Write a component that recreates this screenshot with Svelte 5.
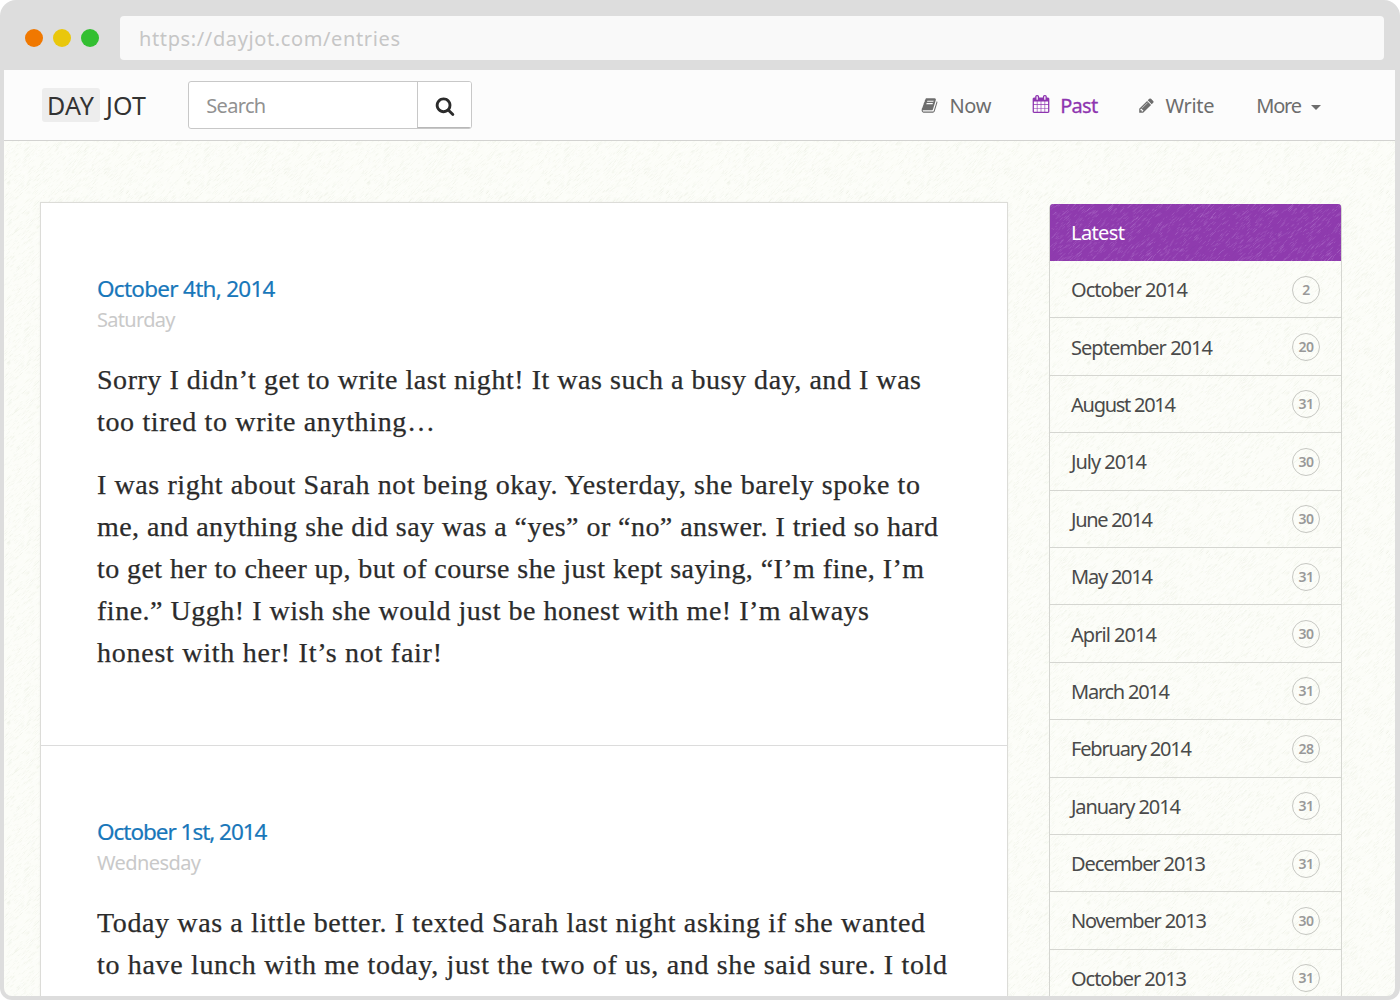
<script>
  const nav = [
    { label: 'Now', icon: 'book', width: 42 },
    { label: 'Past', icon: 'calendar', width: 38, active: true },
    { label: 'Write', icon: 'pencil', width: 49 }
  ];

  const icons = {
    search: 'M1216 832q0-185-131.5-316.5t-316.5-131.5-316.5 131.5-131.5 316.5 131.5 316.5 316.5 131.5 316.5-131.5 131.5-316.5zm512 832q0 52-38 90t-90 38q-54 0-90-38l-343-342q-179 124-399 124-143 0-273.5-55.5t-225-150-150-225-55.5-273.5 55.5-273.5 150-225 225-150 273.5-55.5 273.5 55.5 225 150 150 225 55.5 273.5q0 220-124 399l343 343q37 37 37 90z',
    calendar: 'M192 1664h288v-288h-288v288zm352 0h320v-288h-320v288zm-352-352h288v-320h-288v320zm352 0h320v-320h-320v320zm-352-384h288v-288h-288v288zm736 736h320v-288h-320v288zm-384-736h320v-288h-320v288zm768 736h288v-288h-288v288zm-384-352h320v-320h-320v320zm-352-864v-288q0-13-9.5-22.5t-22.5-9.5h-64q-13 0-22.5 9.5t-9.5 22.5v288q0 13 9.5 22.5t22.5 9.5h64q13 0 22.5-9.5t9.5-22.5zm736 864h288v-320h-288v320zm-384-384h320v-288h-320v288zm384 0h288v-288h-288v288zm32-480v-288q0-13-9.5-22.5t-22.5-9.5h-64q-13 0-22.5 9.5t-9.5 22.5v288q0 13 9.5 22.5t22.5 9.5h64q13 0 22.5-9.5t9.5-22.5zm384-64v1280q0 52-38 90t-90 38h-1408q-52 0-90-38t-38-90v-1280q0-52 38-90t90-38h128v-96q0-66 47-113t113-47h64q66 0 113 47t47 113v96h384v-96q0-66 47-113t113-47h64q66 0 113 47t47 113v96h128q52 0 90 38t38 90z',
    pencil: 'M491 1536l91-91-235-235-91 91v107h128v128h107zm523-928q0-22-22-22-10 0-17 7l-542 542q-7 7-7 17 0 22 22 22 10 0 17-7l542-542q7-7 7-17zm-54-192l416 416-832 832h-416v-416zm683 96q0 53-37 90l-166 166-416-416 166-165q36-38 90-38 53 0 91 38l235 234q37 39 37 91z',
    book: 'M1703 478q40 57 18 129l-275 906q-19 64-76.5 107.5t-122.5 43.5h-923q-77 0-148.5-53.5t-99.5-131.5q-24-67-2-127 0-4 3-27t4-37q1-8-3-21.5t-3-19.5q2-11 8-21t16.5-23.5 16.5-23.5q23-38 45-91.5t30-91.5q3-10 .5-30t-.5-28q3-11 17-28t17-23q21-36 42-92t25-90q1-9-2.5-32t.5-28q4-13 22-30.5t22-22.5q19-26 42.5-84.5t27.5-96.5q1-8-3-25.5t-2-26.5q2-8 9-18t18-23 17-21q8-12 16.5-30.5t15-35 16-36 19.5-32 26.5-23.5 36-11.5 47.5 5.5l-1 3q38-9 51-9h761q74 0 114 56t18 130l-274 906q-36 119-71.5 153.5t-128.5 34.5h-869q-27 0-38 15-11 16-1 43 24 70 144 70h923q29 0 56-15.5t35-41.5l300-987q7-22 5-57 38 15 59 43zm-1064 2q-4 13 2 22.5t20 9.5h608q13 0 25.5-9.5t16.5-22.5l21-64q4-13-2-22.5t-20-9.5h-608q-13 0-25.5 9.5t-16.5 22.5zm-83 256q-4 13 2 22.5t20 9.5h608q13 0 25.5-9.5t16.5-22.5l21-64q4-13-2-22.5t-20-9.5h-608q-13 0-25.5 9.5t-16.5 22.5z'
  };

  const entries = [
    {
      date: 'October 4th, 2014', dateWidth: 178.5, day: 'Saturday', dayWidth: 78.5,
      paragraphs: [
        [['Sorry I didn’t get to write last night! It was such a busy day, and I was', 824],
         ['too tired to write anything…', 338]],
        [['I was right about Sarah not being okay. Yesterday, she barely spoke to', 823],
         ['me, and anything she did say was a “yes” or “no” answer. I tried so hard', 841],
         ['to get her to cheer up, but of course she just kept saying, “I’m fine, I’m', 827],
         ['fine.” Uggh! I wish she would just be honest with me! I’m always', 772],
         ['honest with her! It’s not fair!', 345]]
      ]
    },
    {
      date: 'October 1st, 2014', dateWidth: 170.5, day: 'Wednesday', dayWidth: 104,
      paragraphs: [
        [['Today was a little better. I texted Sarah last night asking if she wanted', 828],
         ['to have lunch with me today, just the two of us, and she said sure. I told', 850],
         ['her about how I wasn’t sure we were even talking and she’d been', 738]]
      ]
    }
  ];

  const months = [
    ['October 2014', 2, 117], ['September 2014', 20, 142], ['August 2014', 31, 105],
    ['July 2014', 30, 76], ['June 2014', 30, 82], ['May 2014', 31, 82],
    ['April 2014', 30, 86], ['March 2014', 31, 99], ['February 2014', 28, 121],
    ['January 2014', 31, 110], ['December 2013', 31, 135], ['November 2013', 30, 136],
    ['October 2013', 31, 116]
  ];

  // Spreads the tracking of a line so that it fills its measure.
  function fit(node, width) {
    const natural = node.getBoundingClientRect().width;
    const count = [...node.textContent].length;
    node.style.letterSpacing = `${(width - natural) / (count - 1)}px`;
  }

  // Short diagonal fibres that tile into the woven paper texture.
  function fibres(count, size, seed) {
    let s = seed;
    const rand = () => (s = (s * 16807) % 2147483647) / 2147483647;
    let d = '';
    for (let i = 0; i < count; i++) {
      const l = 1 + rand() * 3;
      d += `M${(rand() * size).toFixed(1)} ${(rand() * size).toFixed(1)}l${l.toFixed(1)} ${(-l).toFixed(1)}`;
    }
    return d;
  }
  const dark = fibres(3000, 180, 77);
  const light = fibres(2600, 180, 991);
</script>

{#snippet icon(name)}
  <svg class="icon icon-{name}" viewBox="0 0 1792 1792" aria-hidden="true"><path d={icons[name]} /></svg>
{/snippet}

<div class="browser">
  <header class="chrome">
    <i class="dot orange"></i><i class="dot yellow"></i><i class="dot green"></i>
    <div class="address"><span use:fit={261}>https://dayjot.com/entries</span></div>
  </header>

  <div class="page">
    <svg class="texture" aria-hidden="true">
      <defs>
        <pattern id="paper" width="180" height="180" patternUnits="userSpaceOnUse">
          <path class="shade" d={dark} /><path class="shine" d={light} />
        </pattern>
      </defs>
      <rect width="100%" height="100%" fill="url(#paper)" />
    </svg>

    <nav class="navbar">
      <div class="brand"><b><span use:fit={47}>DAY</span></b><span use:fit={40}>JOT</span></div>
      <div class="search">
        <div class="field"><span use:fit={60}>Search</span></div>
        <button aria-label="Search">{@render icon('search')}</button>
      </div>
      <div class="links">
        {#each nav as item}
          <a class="link-{item.icon}" class:active={item.active}>{@render icon(item.icon)}<span use:fit={item.width}>{item.label}</span></a>
        {/each}
        <a class="more"><span use:fit={46}>More</span><i class="caret"></i></a>
      </div>
    </nav>

    <main>
      <section class="entries">
        {#each entries as entry}
          <article>
            <h2><span use:fit={entry.dateWidth}>{entry.date}</span></h2>
            <div class="day"><span use:fit={entry.dayWidth}>{entry.day}</span></div>
            {#each entry.paragraphs as lines}
              <p>
                {#each lines as [text, width]}
                  <span class="line"><span use:fit={width}>{text}</span></span>
                {/each}
              </p>
            {/each}
          </article>
        {/each}
      </section>

      <aside>
        <div class="latest">
          <svg class="texture weave" aria-hidden="true">
            <defs>
              <pattern id="cloth" width="180" height="180" patternUnits="userSpaceOnUse">
                <path class="cloth-light" d={light} /><path class="cloth-dark" d={dark} />
              </pattern>
            </defs>
            <rect width="100%" height="100%" fill="url(#cloth)" />
          </svg>
          <span class="over"><span use:fit={54}>Latest</span></span>
        </div>
        {#each months as [name, count, width]}
          <div class="month">
            <span use:fit={width}>{name}</span>
            <span class="badge">{count}</span>
          </div>
        {/each}
      </aside>
    </main>
  </div>
</div>

<style>
  :global(body) { background: #fff; overflow: hidden; }
  * { box-sizing: border-box; }
  span { white-space: pre; }

  .browser {
    width: 1400px; height: 1000px; overflow: hidden;
    display: flex; flex-direction: column;
    padding: 0 5px 4px 4px;
    background: #ddd; border-radius: 16px 16px 12px 12px;
    font-family: "Noto Sans", "Open Sans", sans-serif;
  }
  .chrome {
    flex: none; height: 70px; display: flex; align-items: center;
    gap: 10px; padding: 0 11px 0 21px;
  }
  .dot { width: 18px; height: 18px; border-radius: 50%; margin-bottom: -6px; margin-top: -1px; flex: none; }
  .orange { background: #f07800; }
  .yellow { background: #e9c70c; }
  .green { background: #33bf31; }
  .address {
    flex: 1; height: 44px; margin: 6px 0 0 11px; padding: 1px 0 0 19px;
    background: #f9f9f9; border-radius: 4px;
    color: #c6c6c6; font-size: 20px; line-height: 44px;
  }

  .page {
    position: relative; flex: 1; overflow: hidden;
    background: #fcfdf8; border-radius: 0 0 8px 8px;
  }
  .texture { position: absolute; inset: 0; width: 100%; height: 100%; }
  .texture path { fill: none; stroke-width: .8; }
  .shade { stroke: #e9ebdf; stroke-opacity: .4; }
  .shine { stroke: #fff; stroke-opacity: .45; }

  .navbar {
    position: relative; height: 71px; display: flex; align-items: center;
    padding: 0 74px 0 38px; background: #fcfcfc;
    border-bottom: 1px solid #d3d3d1;
  }
  .brand { display: flex; align-items: center; font-size: 25px; line-height: 34px; color: #333; }
  .brand b { width: 58px; height: 34px; padding-left: 5px; margin-right: 6px; background: #ededed; border-radius: 3px; font-weight: 400; }
  .search {
    display: flex; width: 284px; height: 48px; margin-left: 42px;
    border: 1px solid #c8c8c8; border-radius: 3px; background: #fff; overflow: hidden;
  }
  .field { flex: 1; padding-left: 17px; font-size: 20px; line-height: 47px; color: #919191; }
  .search button {
    width: 54px; height: 46px; padding: 2px 0 0; border: 0; border-left: 1px solid #c8c8c8;
    border-bottom: 1px solid #b8b8b8; background: #fff; color: #2b2b2b;
    display: grid; place-items: center;
  }
  .icon { fill: currentColor; display: block; flex: none; width: 18px; height: 18px; }
  .icon-search { width: 20px; height: 20px; }
  .links { flex: 1; display: flex; justify-content: flex-end; padding-top: 1px; color: #6d6d6d; font-size: 20px; line-height: 30px; }
  .links a { display: flex; align-items: center; }
  .links .icon-book { width: 17px; height: 17px; margin: -1px 11px 0 0; }
  .links .icon-calendar { margin: -3px 10px 0 0; }
  .links .icon-pencil { width: 17px; height: 17px; margin: -1px 10px 0 0; }
  .link-book { margin-right: 41px; }
  .link-calendar { margin-right: 41px; }
  .link-pencil { margin-right: 42px; }
  .active { color: #8e35b0; -webkit-text-stroke: .3px currentColor; }
  .caret { border: 5px solid transparent; border-top-color: currentColor; border-bottom: 0; margin: 3px 0 0 10px; }

  main { position: relative; display: flex; gap: 41px; align-items: flex-start; padding: 61px 0 0 36px; }
  .entries {
    width: 968px; background: #fff; border: 1px solid #dcdcd8;
    box-shadow: 0 0 2px rgba(0, 0, 0, .06);
  }
  article { height: 543px; padding: 70px 0 0 56px; border-bottom: 1px solid #dcdcdc; }
  h2 { margin: 0; font-size: 22.5px; font-weight: 400; line-height: 32px; color: #1877ba; -webkit-text-stroke: .2px currentColor; }
  .day { font-size: 20px; line-height: 29px; color: #c9c9c9; }
  p {
    margin: 0 0 21px; font-family: "Liberation Serif", serif;
    font-size: 28px; line-height: 42px; color: #2b2b2b;
    -webkit-text-stroke: .25px currentColor;
  }
  .day + p { margin-top: 25px; }
  .line { display: block; height: 42px; }

  aside { width: 293px; margin-top: 2px; border: 1px solid #d5d6d1; border-radius: 4px 4px 0 0; }
  .latest {
    position: relative; height: 57px; margin: -1px 0 0 0; padding-left: 21px;
    background: #8f3bae; border-radius: 3px 3px 0 0; overflow: hidden;
    color: #fff; font-size: 20px; line-height: 57px;
  }
  .over { position: relative; }
  .cloth-light { stroke: #b377cd; stroke-opacity: .45; }
  .cloth-dark { stroke: #8230a3; stroke-opacity: .2; }
  .month {
    display: flex; align-items: center; justify-content: space-between;
    height: 57.4px; padding: 1px 21px 0 21px;
    border-bottom: 1px solid #d5d6d1; color: #4a4a4a; font-size: 20px;
  }
  .badge {
    width: 28px; height: 28px; border: 1.5px solid #c6c7c2; border-radius: 50%;
    color: #999; font-size: 14px; font-weight: 600; line-height: 26px; text-align: center; letter-spacing: -.4px;
  }
</style>
